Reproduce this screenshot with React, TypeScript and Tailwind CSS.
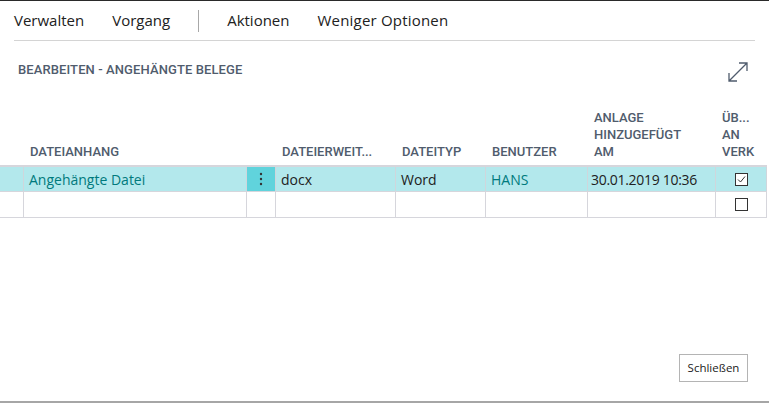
import React from "react";

const columns = [
  { key: "sel", label: [""], w: "w-[24px]" },
  { key: "name", label: ["DATEIANHANG"], w: "w-[223px]" },
  { key: "dots", label: [""], w: "w-[29px]" },
  { key: "ext", label: ["DATEIERWEIT..."], w: "w-[120px]" },
  { key: "type", label: ["DATEITYP"], w: "w-[90px]" },
  { key: "user", label: ["BENUTZER"], w: "w-[102px]" },
  { key: "date", label: ["ANLAGE", "HINZUGEFÜGT", "AM"], w: "w-[128px]" },
  { key: "flow", label: ["ÜB...", "AN", "VERK"], w: "w-[51px]" },
];

const Checkbox = ({ checked }: { checked: boolean }) => (
  <div className="mx-auto flex h-[13px] w-[13px] items-center justify-center border border-[#333] bg-white">
    {checked && (
      <svg width="9" height="9" viewBox="0 0 9 9">
        <path d="M1 4.5 L3.5 7 L8 1.5" fill="none" stroke="#333" strokeWidth="1" />
      </svg>
    )}
  </div>
);

export default function App() {
  return (
    <div className="relative h-[403px] w-[769px] overflow-hidden bg-white font-['Open_Sans',sans-serif] text-[#212121]">
      <div className="h-px w-full bg-[#2a2a2a]" />
      {/* Menüleiste */}
      <div className="mx-[14px] flex h-[40px] items-center border-b border-[#d4d4d4] text-[15px]">
        <span className="mr-[28px]">Verwalten</span>
        <span>Vorgang</span>
        <span className="mx-[28px] h-[22px] w-px bg-[#a8a8a8]" />
        <span className="mr-[28px]">Aktionen</span>
        <span className="tracking-[0.2px]">Weniger Optionen</span>
      </div>

      {/* Titel */}
      <div className="flex items-start justify-between pl-[18px] pr-[20px] pt-[19px]">
        <h1 className="font-['Roboto',sans-serif] text-[13px] font-medium tracking-[0.1px] text-[#505c6d]">
          BEARBEITEN - ANGEHÄNGTE BELEGE
        </h1>
        <svg width="22" height="22" viewBox="0 0 22 22" className="mt-[1px]">
          <path
            d="M2 20 L20 2 M12 2 H20 V10 M2 12 V20 H10"
            fill="none"
            stroke="#505c6d"
            strokeWidth="1.3"
          />
        </svg>
      </div>

      {/* Tabelle */}
      <div className="mt-[24px] w-[767px]">
        <div className="flex h-[58px] items-end font-['Roboto',sans-serif] text-[13px] font-medium leading-[17px] text-[#505c6d]">
          {columns.map((c) => (
            <div key={c.key} className={`${c.w} shrink-0 overflow-hidden whitespace-nowrap px-[6px] pb-[5px]`}>
              {c.label.map((l, i) => (
                <div key={i}>{l}</div>
              ))}
            </div>
          ))}
        </div>
        <div className="border-t-2 border-[#d6d6dc]">
          {/* Zeile 1 */}
          <div className="flex h-[25px] border-b border-[#d6d6dc] bg-[#b3e8ec] text-[14px]">
            <div className="w-[24px] shrink-0 border-r border-[#cfd6dc]" />
            <div className="flex w-[223px] shrink-0 items-center border-r border-[#cfd6dc] px-[5px] text-[#007a7d]">
              Angehängte Datei
            </div>
            <div className="flex w-[29px] shrink-0 items-center justify-center border-r border-[#cfd6dc] bg-[#60d3dc]">
              <svg width="4" height="14" viewBox="0 0 4 14">
                <circle cx="2" cy="2" r="1.2" fill="#333" />
                <circle cx="2" cy="7" r="1.2" fill="#333" />
                <circle cx="2" cy="12" r="1.2" fill="#333" />
              </svg>
            </div>
            <div className="flex w-[120px] shrink-0 items-center border-r border-[#cfd6dc] px-[5px]">docx</div>
            <div className="flex w-[90px] shrink-0 items-center border-r border-[#cfd6dc] px-[5px]">Word</div>
            <div className="flex w-[102px] shrink-0 items-center border-r border-[#cfd6dc] px-[5px] text-[#007a7d]">
              HANS
            </div>
            <div className="flex w-[128px] shrink-0 items-center border-r border-[#cfd6dc] px-[3px] tracking-[-0.3px]">
              30.01.2019 10:36
            </div>
            <div className="flex w-[51px] shrink-0 items-center border-r border-[#cfd6dc]">
              <Checkbox checked />
            </div>
          </div>
          {/* Zeile 2 */}
          <div className="flex h-[26px] border-b border-[#d6d6dc] text-[14px]">
            <div className="w-[24px] shrink-0 border-r border-[#d6d6dc]" />
            <div className="w-[223px] shrink-0 border-r border-[#d6d6dc]" />
            <div className="w-[29px] shrink-0 border-r border-[#d6d6dc]" />
            <div className="w-[120px] shrink-0 border-r border-[#d6d6dc]" />
            <div className="w-[90px] shrink-0 border-r border-[#d6d6dc]" />
            <div className="w-[102px] shrink-0 border-r border-[#d6d6dc]" />
            <div className="w-[128px] shrink-0 border-r border-[#d6d6dc]" />
            <div className="flex w-[51px] shrink-0 items-center border-r border-[#d6d6dc]">
              <Checkbox checked={false} />
            </div>
          </div>
        </div>
      </div>

      {/* Fußzeile */}
      <div className="flex justify-end pr-[21px] pt-[136px]">
        <button className="h-[28px] w-[69px] border border-[#b4b4b4] bg-white text-[11.5px] text-[#212121]">
          Schließen
        </button>
      </div>
      <div className="absolute bottom-0 left-0 h-[2px] w-full bg-[#a6a6a6]" />
    </div>
  );
}
